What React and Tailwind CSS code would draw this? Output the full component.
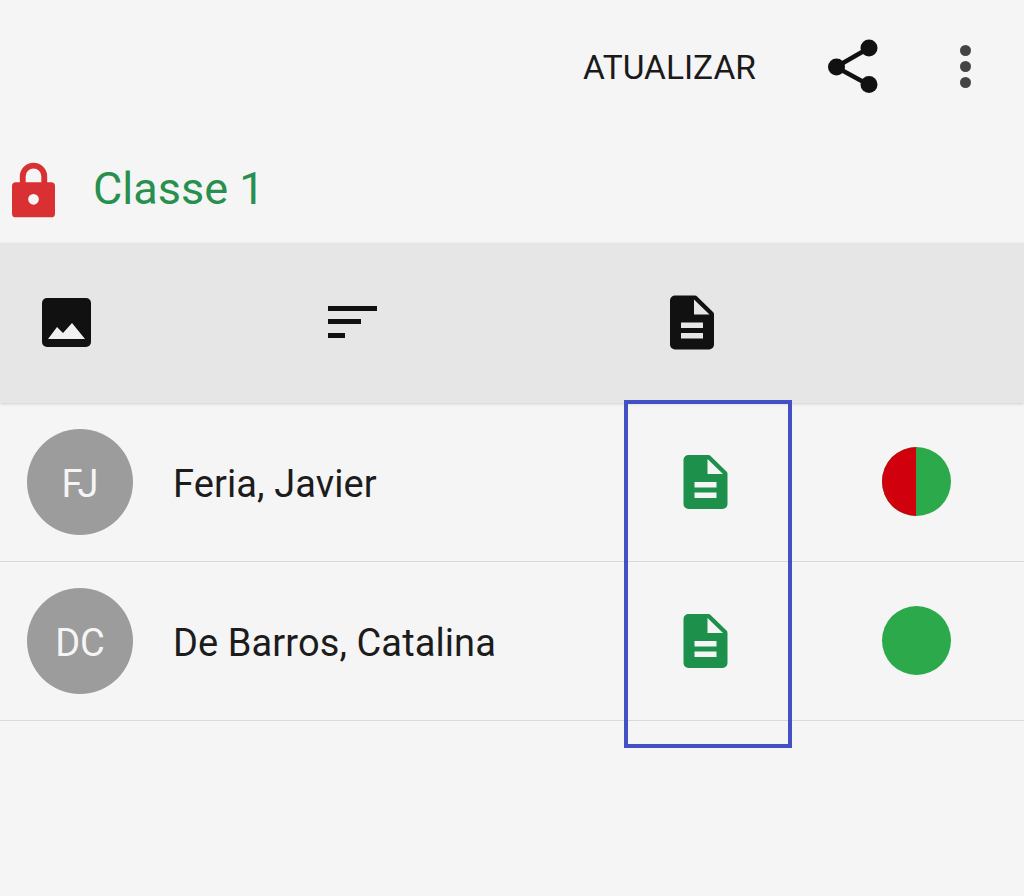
import React from "react";

const font = { fontFamily: "Roboto, sans-serif" };

const DocIcon = ({ className }) => (
  <svg viewBox="0 0 44 54" className={className}>
    <path
      fill="currentColor"
      fillRule="evenodd"
      d="M5 0h20a3 3 0 0 1 2.1.9L43 16.500a3 3 0 0 1 1 2.200V49a5 5 0 0 1-5 5H5a5 5 0 0 1-5-5V5a5 5 0 0 1 5-5ZM24 4v15h15.500L24 4ZM11 27v5.500h22V27H11Zm0 10.500V43h22v-5.500H11Z"
    />
  </svg>
);

const StudentRow = ({ initials, name, split }) => (
  <div className="flex h-[159px] items-center border-b border-[#d9d9d9]">
    <div className="ml-[27px] flex h-[106px] w-[106px] shrink-0 items-center justify-center rounded-full bg-[#9c9c9c] pt-[4px] text-[38px] leading-none text-[#f5f5f5]">
      {initials}
    </div>
    <div className="ml-[40px] w-[510px] pt-[4px] text-[38px] leading-none tracking-[0.1px] text-[#1c1c1c]">{name}</div>
    <DocIcon className="h-[54px] w-[45px] shrink-0 text-[#1d914c]" />
    <div className="mb-[2px] ml-[153.500px] flex h-[69px] w-[69px] shrink-0 overflow-hidden rounded-full bg-[#2ca94b]">
      {split && <div className="h-full w-1/2 bg-[#d0000d]" />}
    </div>
  </div>
);

export default function App() {
  return (
    <div className="relative h-[896px] w-[1024px] overflow-hidden bg-[#f5f5f5]" style={font}>
      {/* Top bar */}
      <div className="flex h-[130px] items-center pl-[583px] pt-[2px]">
        <span className="mt-[4px] w-[172px] whitespace-nowrap text-[33.500px] leading-none text-[#1a1a1a]">ATUALIZAR</span>
        <svg viewBox="0 0 50 54" className="ml-[73px] h-[54px] w-[50px] text-[#111111]">
          <path d="M8 28 41 9M8 28l33 18" stroke="currentColor" strokeWidth="4.500" fill="none" />
          <circle cx="41" cy="9" r="8.500" fill="currentColor" />
          <circle cx="8.500" cy="28" r="8.500" fill="currentColor" />
          <circle cx="41" cy="45.500" r="8.500" fill="currentColor" />
        </svg>
        <div className="ml-[82px] flex flex-col gap-[5px]">
          <span className="h-[11px] w-[11px] rounded-full bg-[#444444]" />
          <span className="h-[11px] w-[11px] rounded-full bg-[#444444]" />
          <span className="h-[11px] w-[11px] rounded-full bg-[#444444]" />
        </div>
      </div>

      {/* Class title */}
      <div className="flex h-[113px] items-center pl-[12px] pt-[6px]">
        <svg viewBox="0 0 44 56" className="h-[56px] w-[43px] text-[#d83033]">
          <path
            fill="currentColor"
            fillRule="evenodd"
            d="M8 20v-6a14 14 0 0 1 28 0v6h4a4 4 0 0 1 4 4v28a4 4 0 0 1-4 4H4a4 4 0 0 1-4-4V24a4 4 0 0 1 4-4h4Zm6 0h16v-6a8 8 0 0 0-16 0v6Zm8 12a5.500 5.500 0 1 0 0 11 5.500 5.500 0 0 0 0-11Z"
          />
        </svg>
        <span className="ml-[38px] mt-[-3px] text-[45px] leading-none text-[#27904f]">Classe 1</span>
      </div>

      {/* Table header */}
      <div className="flex h-[160px] items-center bg-[#e6e6e6] shadow-[0_1px_3px_rgba(0,0,0,0.15)]">
        <svg viewBox="0 0 49 49" className="mb-[2px] ml-[42px] h-[49px] w-[49px] shrink-0">
          <rect width="49" height="49" rx="5" fill="#111111" />
          <path d="M6 41 15 29l6 6 9-10 13 16H6Z" fill="#f0f0f0" />
        </svg>
        <div className="mb-[3px] ml-[237px] flex w-[49px] shrink-0 flex-col gap-[8.500px]">
          <span className="h-[5px] w-[49px] bg-[#111111]" />
          <span className="h-[5px] w-[33px] bg-[#111111]" />
          <span className="h-[5px] w-[17px] bg-[#111111]" />
        </div>
        <DocIcon className="mb-[2px] ml-[293px] h-[55px] w-[44px] shrink-0 text-[#111111]" />
      </div>

      {/* Students */}
      <StudentRow initials="FJ" name="Feria, Javier" split />
      <StudentRow initials="DC" name="De Barros, Catalina" />

      {/* Highlight drawn over the screenshot */}
      <div className="absolute left-[624px] top-[400px] h-[348px] w-[168px] border-4 border-[#4450c4]" />
    </div>
  );
}
